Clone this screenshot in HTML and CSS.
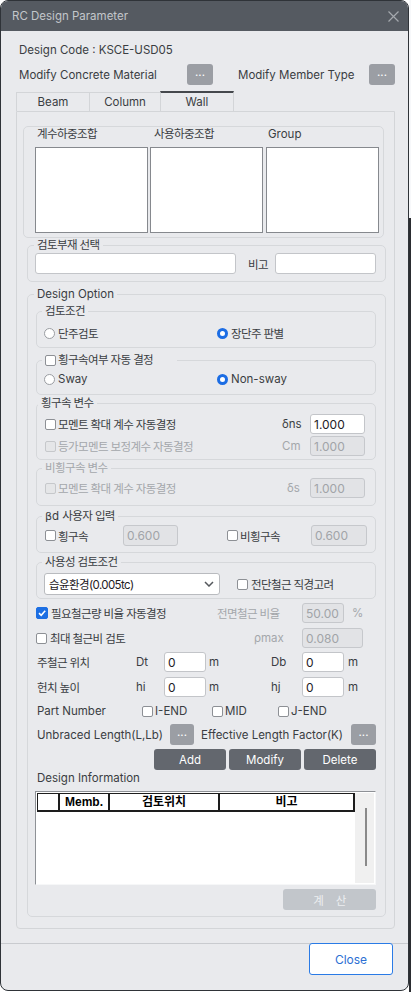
FILE: index.html
```html
<!DOCTYPE html>
<html lang="ko">
<head>
<meta charset="utf-8">
<title>RC Design Parameter</title>
<link rel="stylesheet" href="styles.css">
</head>
<body>
<div class="dialog">
  <header class="titlebar">
    <span class="title">RC Design Parameter</span>
    <svg class="xicon" viewBox="0 0 11 11" width="11" height="11"><path d="M0.5 0.5L10.5 10.5M10.5 0.5L0.5 10.5"/></svg>
  </header>
  <main class="content">
    <div class="code">Design Code : KSCE-USD05</div>
    <div class="modrow">
      <span class="modlbl">Modify Concrete Material</span>
      <button class="dots">...</button>
      <span class="modlbl2">Modify Member Type</span>
      <button class="dots">...</button>
    </div>
    <div class="tabs">
      <div class="tab beam">Beam</div>
      <div class="tab column">Column</div>
      <div class="tab wall">Wall</div>
    </div>
    <div class="panel">
      <div class="listgrp">
        <div class="listcol"><div class="listlbl k">계수하중조합</div><div class="listbox"></div></div>
        <div class="listcol c2"><div class="listlbl k">사용하중조합</div><div class="listbox"></div></div>
        <div class="listcol c3"><div class="listlbl">Group</div><div class="listbox"></div></div>
      </div>

      <fieldset class="fs top fs-sel">
        <legend class="k">검토부재 선택</legend>
        <div class="selrow">
          <input class="inp w201" type="text">
          <span class="bigo k">비고</span>
          <input class="inp w101" type="text">
        </div>
      </fieldset>

      <fieldset class="fs top fs-opt">
        <legend>Design Option</legend>

        <fieldset class="fs sub f-chk">
          <legend class="k">검토조건</legend>
          <div class="radios">
            <span class="ropt first"><span class="rb"></span><span class="k">단주검토</span></span>
            <span class="ropt"><span class="rb on"></span><span class="k">장단주 판별</span></span>
          </div>
        </fieldset>

        <fieldset class="fs sub f-sway">
          <legend class="cbleg"><span class="cbl"><span class="cb"></span><span class="k">횡구속여부 자동 결정</span></span></legend>
          <div class="radios">
            <span class="ropt first"><span class="rb"></span>Sway</span>
            <span class="ropt"><span class="rb on"></span>Non-sway</span>
          </div>
        </fieldset>

        <fieldset class="fs sub f-brace">
          <legend class="k">횡구속 변수</legend>
          <div class="vrow">
            <span class="cb"></span><span class="vtext k">모멘트 확대 계수 자동결정</span>
            <span class="sym">δns</span><input class="inp w55" type="text" value="1.000">
          </div>
          <div class="vrow v2 dim">
            <span class="cb dis"></span><span class="vtext k">등가모멘트 보정계수 자동결정</span>
            <span class="sym">Cm</span><input class="inp w55 dis" type="text" value="1.000">
          </div>
        </fieldset>

        <fieldset class="fs sub f-nb">
          <legend class="k dim">비횡구속 변수</legend>
          <div class="vrow dim">
            <span class="cb dis"></span><span class="vtext k">모멘트 확대 계수 자동결정</span>
            <span class="sym s5">δs</span><input class="inp w55 dis" type="text" value="1.000">
          </div>
        </fieldset>

        <fieldset class="fs sub f-bd">
          <legend><span class="beta">β</span>d <span class="k">사용자 입력</span></legend>
          <div class="bdrow">
            <span class="bg1"><span class="cb"></span><span class="k">횡구속</span></span>
            <input class="inp w55 dis" type="text" value="0.600">
            <span class="bg2"><span class="cb"></span><span class="k">비횡구속</span></span>
            <input class="inp w56 dis" type="text" value="0.600">
          </div>
        </fieldset>

        <fieldset class="fs sub f-use">
          <legend class="k">사용성 검토조건</legend>
          <div class="userow">
            <div class="select"><span class="k">습윤환경(0.005tc)</span>
              <svg class="chev" viewBox="0 0 10 6" width="10" height="6"><path d="M1 1L5 5L9 1"/></svg>
            </div>
            <span class="cb shear"></span><span class="k">전단철근 직경고려</span>
          </div>
        </fieldset>

        <div class="row r1">
          <span class="g181"><span class="cb on"><svg viewBox="0 0 10 10" width="10" height="10"><path d="M2 5.2L4.2 7.3L8.2 2.8"/></svg></span><span class="k">필요철근량 비율 자동결정</span></span>
          <span class="g85 dim k">전면철근 비율</span>
          <input class="inp w42 dis" type="text" value="50.00">
          <span class="pct dim">%</span>
        </div>

        <div class="row r2">
          <span class="g181"><span class="cb"></span><span class="k">최대 철근비 검토</span></span>
          <span class="g85 rho dim">ρmax</span>
          <input class="inp w61 dis" type="text" value="0.080">
        </div>

        <div class="row r3">
          <span class="rlbl k">주철근 위치</span>
          <span class="sym1">Dt</span>
          <input class="inp w42" type="text" value="0">
          <span class="unit1">m</span>
          <span class="sym2">Db</span>
          <input class="inp w42" type="text" value="0">
          <span class="unit2">m</span>
        </div>

        <div class="row r4">
          <span class="rlbl k">헌치 높이</span>
          <span class="sym1">hi</span>
          <input class="inp w42" type="text" value="0">
          <span class="unit1">m</span>
          <span class="sym2">hj</span>
          <input class="inp w42" type="text" value="0">
          <span class="unit2">m</span>
        </div>

        <div class="row r5">
          <span class="plbl">Part Number</span>
          <span class="pchk pc1"><span class="cb"></span>I-END</span>
          <span class="pchk pc2"><span class="cb"></span>MID</span>
          <span class="pchk"><span class="cb"></span>J-END</span>
        </div>

        <div class="row r6">
          <span class="ulbl">Unbraced Length(L,Lb)</span>
          <button class="dots sm">...</button>
          <span class="elbl">Effective Length Factor(K)</span>
          <button class="dots sm2">...</button>
        </div>

        <div class="row r7">
          <button class="act">Add</button>
          <button class="act">Modify</button>
          <button class="act">Delete</button>
        </div>

        <div class="dinfo">Design Information</div>

        <div class="table">
          <div class="tmain">
            <div class="thead">
              <div class="th c0"></div>
              <div class="th c1">Memb.</div>
              <div class="th c2">검토위치</div>
              <div class="th c3">비고</div>
            </div>
          </div>
          <div class="vscroll"><div class="thumb"></div></div>
        </div>

        <button class="calc k">계 산</button>
      </fieldset>
    </div>
  </main>
  <footer class="footer">
    <button class="close">Close</button>
  </footer>
</div>
</body>
</html>
```

FILE: styles.css
```css
* { box-sizing: border-box; }
html, body { margin: 0; padding: 0; }
body {
  width: 411px;
  height: 992px;
  overflow: hidden;
  background: linear-gradient(to bottom, #f7f8fa 0, #f7f8fa 218px, #2b2d31 218px) right top / 2px 100% no-repeat, #ffffff;
  font-family: Inter, "Noto Sans CJK KR", sans-serif;
  font-size: 11.5px;
  color: #3a3d42;
}
.k { font-size: 11.5px; letter-spacing: -0.6px; }
.dim { color: #a4a7ab; }
button { font: inherit; margin: 0; cursor: default; }

.dialog {
  width: 409px;
  height: 991px;
  border: 1px solid #2f3338;
  border-radius: 8px;
  background: #e9eaed;
  overflow: hidden;
  display: flex;
  flex-direction: column;
}
.titlebar {
  flex: none;
  height: 30px;
  background: #555a61;
  display: flex;
  align-items: center;
  justify-content: space-between;
  padding: 0 9px 0 11px;
}
.title { color: #c3c6ca; }
.xicon { fill: none; stroke: #a5a9ae; stroke-width: 1.2; }

.content { flex: none; padding: 11px 13px 14px 15px; }
.code { height: 16px; line-height: 16px; padding-left: 3px; }
.modrow { display: flex; align-items: center; height: 21px; margin-top: 6px; padding-left: 3px; }
.modlbl { width: 168px; }
.modlbl2 { width: 131px; margin-left: 25px; }
.dots {
  width: 26px; height: 21px; padding: 0 0 3px;
  border: 0; border-radius: 3px;
  background: #9b9ea4; color: #fff; line-height: 1;
}

.tabs { display: flex; align-items: flex-end; height: 20px; margin-top: 6px; }
.tab {
  height: 19px;
  border: solid #d3d5d8;
  border-width: 1px 0 0 1px;
  text-align: center;
  line-height: 18px;
}
.beam { width: 73px; }
.column { width: 71px; }
.wall { width: 74px; height: 20px; border-top: 2px solid #45484d; border-right-width: 1px; }

.panel {
  border: 1px solid #d3d5d8;
  border-radius: 0 0 4px 4px;
  padding: 14px 10px 11px 6px;
}
.listgrp {
  display: flex;
  height: 112px;
  border: 1px solid #d6d8db;
  border-radius: 5px;
  padding-left: 11px;
}
.listcol { width: 113px; }
.listcol.c2 { margin-left: 2px; }
.listcol.c3 { margin-left: 3px; }
.listlbl { height: 20px; line-height: 14px; padding-left: 2px; }
.c2 .listlbl { padding-left: 4px; }
.listbox { height: 86px; border: 1px solid #86898e; background: #fff; }

.fs { margin: 0; padding: 0; min-width: 0; border: 1px solid #d6d8db; border-radius: 5px; }
.fs > legend { padding: 0 3px; line-height: 14px; height: 14px; }
.top { width: 359px; margin-left: 4px; }
.fs-sel { padding: 1px 0 7px 7px; }
.fs-sel > legend { margin-left: -1px; }
.selrow { display: flex; align-items: center; height: 21px; }
.inp {
  -webkit-appearance: none; appearance: none;
  margin: 0; height: 20px;
  border: 1px solid #c3c5c9; border-radius: 3px;
  background: #fff;
  font: inherit; font-size: 12px; color: #1e2024;
  padding: 0 3px; outline: none;
}
.inp.dis { background: #e2e3e6; color: #a1a4a8; border-color: #c6c8cc; }
.w201 { width: 201px; height: 21px; }
.w101 { width: 101px; height: 21px; }
.w55 { width: 55px; flex: none; }
.w56 { width: 56px; flex: none; }
.w42 { width: 42px; flex: none; }
.w61 { width: 61px; flex: none; }
.bigo { width: 27px; margin-left: 12px; }

.fs-opt { margin-top: 5px; padding: 0 9px 6px 8px; }
.fs-opt > legend { margin-left: -2px; }
.sub { width: 340px; }

.cb {
  width: 11px; height: 11px; flex: none;
  border: 1px solid #8d9095; border-radius: 2px;
  background: #fff; margin-right: 2px;
}
.cb.dis { background: #e5e6e8; border-color: #c6c8cb; }
.cb.on {
  width: 12px; height: 12px;
  background: #1d6fe3; border-color: #1d6fe3;
  display: flex; align-items: center; justify-content: center;
}
.cb.on svg { fill: none; stroke: #fff; stroke-width: 1.6; }
.rb {
  width: 11px; height: 11px; flex: none;
  border: 1px solid #9a9da2; border-radius: 50%;
  background: #fff; margin-right: 3px;
}
.rb.on { border: 3.5px solid #1c6de4; }

.radios { display: flex; align-items: center; height: 20px; }
.ropt { display: flex; align-items: center; }
.ropt.first { width: 173px; }

.f-chk { margin-top: 3px; padding: 5px 0 4px 7px; }
.f-chk > legend { margin-left: -2px; }
.f-sway { margin-top: 5px; padding: 2px 0 5px 7px; }
.f-sway > legend { margin-left: -2px; padding-right: 24px; }
.cbl { display: inline-flex; align-items: center; height: 14px; }

.f-brace { margin-top: 1px; padding: 4px 10px 3px 8px; }
.f-brace > legend { margin-left: -7px; }
.vrow { display: flex; align-items: center; height: 20px; }
.vrow.v2 { margin-top: 2px; }
.vtext { flex: 1; }
.sym { width: 28px; flex: none; }
.sym.s5 { padding-left: 5px; }
.f-nb { margin-top: 1px; padding: 3px 10px 7px 8px; }
.f-nb > legend { margin-left: -3px; }

.f-bd { margin-top: 3px; padding: 2px 0 6px 8px; }
.f-bd > legend { margin-left: -3px; }
.beta { font-family: "DejaVu Sans", sans-serif; font-size: 11px; }
.bdrow { display: flex; align-items: center; height: 21px; }
.bdrow .inp { height: 21px; }
.bg1 { width: 78px; display: flex; align-items: center; }
.bg2 { width: 84px; margin-left: 49px; display: flex; align-items: center; }

.f-use { margin-top: 2px; padding: 4px 0 3px 7px; }
.f-use > legend { margin-left: -2px; }
.userow { display: flex; align-items: center; height: 22px; }
.select {
  width: 176px; height: 22px;
  border: 1px solid #b9bbbf; border-radius: 3px;
  background: #fff; color: #1e2024;
  display: flex; align-items: center; justify-content: space-between;
  padding: 0 5px 0 4px;
}
.chev { fill: none; stroke: #55585d; stroke-width: 1.5; }
.cb.shear { margin-left: 17px; margin-right: 3px; }

.row { display: flex; align-items: center; height: 20px; }
.r1 { margin-top: 4px; }
.r2 { margin-top: 5px; }
.r3 { margin-top: 4px; }
.r4 { margin-top: 5px; }
.r5 { margin-top: 4px; }
.r6 { margin-top: 3px; height: 21px; }
.r7 { margin-top: 4px; height: 21px; justify-content: flex-end; }
.g181 { width: 181px; display: flex; align-items: center; }
.g181 .cb { margin-right: 3px; }
.g85 { width: 85px; }
.rho { padding-left: 37px; }
.pct { margin-left: 8px; }
.rlbl { width: 100px; padding-left: 1px; }
.sym1 { width: 28px; }
.unit1 { width: 65px; padding-left: 3px; }
.sym2 { width: 31px; }
.unit2 { margin-left: 4px; }
.plbl { width: 106px; padding-left: 1px; }
.pchk { display: flex; align-items: center; }
.pchk .cb { margin-right: 2px; }
.pc1 { width: 70px; }
.pc2 { width: 66px; }
.ulbl { width: 134px; padding-left: 1px; }
.dots.sm { width: 24px; }
.elbl { margin-left: 7px; }
.dots.sm2 { width: 25px; margin-left: auto; }
.act {
  width: 72px; height: 21px;
  border: 0; border-radius: 3px;
  background: #63676e; color: #fff;
  padding: 0;
}
.act + .act { margin-left: 3px; }
.dinfo { margin-top: 1px; height: 14px; line-height: 14px; padding-left: 1px; }

.table {
  display: flex;
  margin: 6px 0 0 -1px;
  width: 341px; height: 94px;
  border: 1px solid;
  border-color: #8e9196 #f6f7f8 #f6f7f8 #8e9196;
  background: #fff;
  padding: 1px;
}
.tmain { width: 318px; flex: none; }
.thead { display: flex; height: 19px; border-top: 1px solid #1d1d1d; border-left: 1px solid #1d1d1d; }
.th {
  height: 18px;
  border-right: 2px solid #1d1d1d;
  border-bottom: 2px solid #1d1d1d;
  background: #fff;
  font-family: "Liberation Sans", "Noto Sans CJK KR", sans-serif;
  font-weight: bold; font-size: 12px;
  color: #000; text-align: center; line-height: 16px;
}
.th.c0 { width: 22px; }
.th.c1 { width: 50px; }
.th.c2 { width: 110px; }
.th.c3 { width: 135px; }
.vscroll { flex: 1; background: #f0f0f0; }
.thumb { width: 2px; height: 58px; margin: 15px 0 0 10px; background: #8a8a8a; }

.calc {
  display: block;
  margin: 4px 0 0 auto;
  width: 93px; height: 21px;
  border: 0; border-radius: 3px;
  background: #c2c6cb; color: #eceef0;
  word-spacing: 10px;
  padding: 0;
}

.footer {
  flex: 1;
  border-top: 1px solid #c9cbcf;
  display: flex;
  justify-content: flex-end;
  align-items: flex-start;
  padding-right: 15px;
}
.close {
  margin-top: -1px;
  width: 84px; height: 32px;
  border: 1px solid #2a7be6; border-radius: 3px;
  background: #fff; color: #2c6fd3;
  font-size: 12px;
  padding: 0;
}
```
